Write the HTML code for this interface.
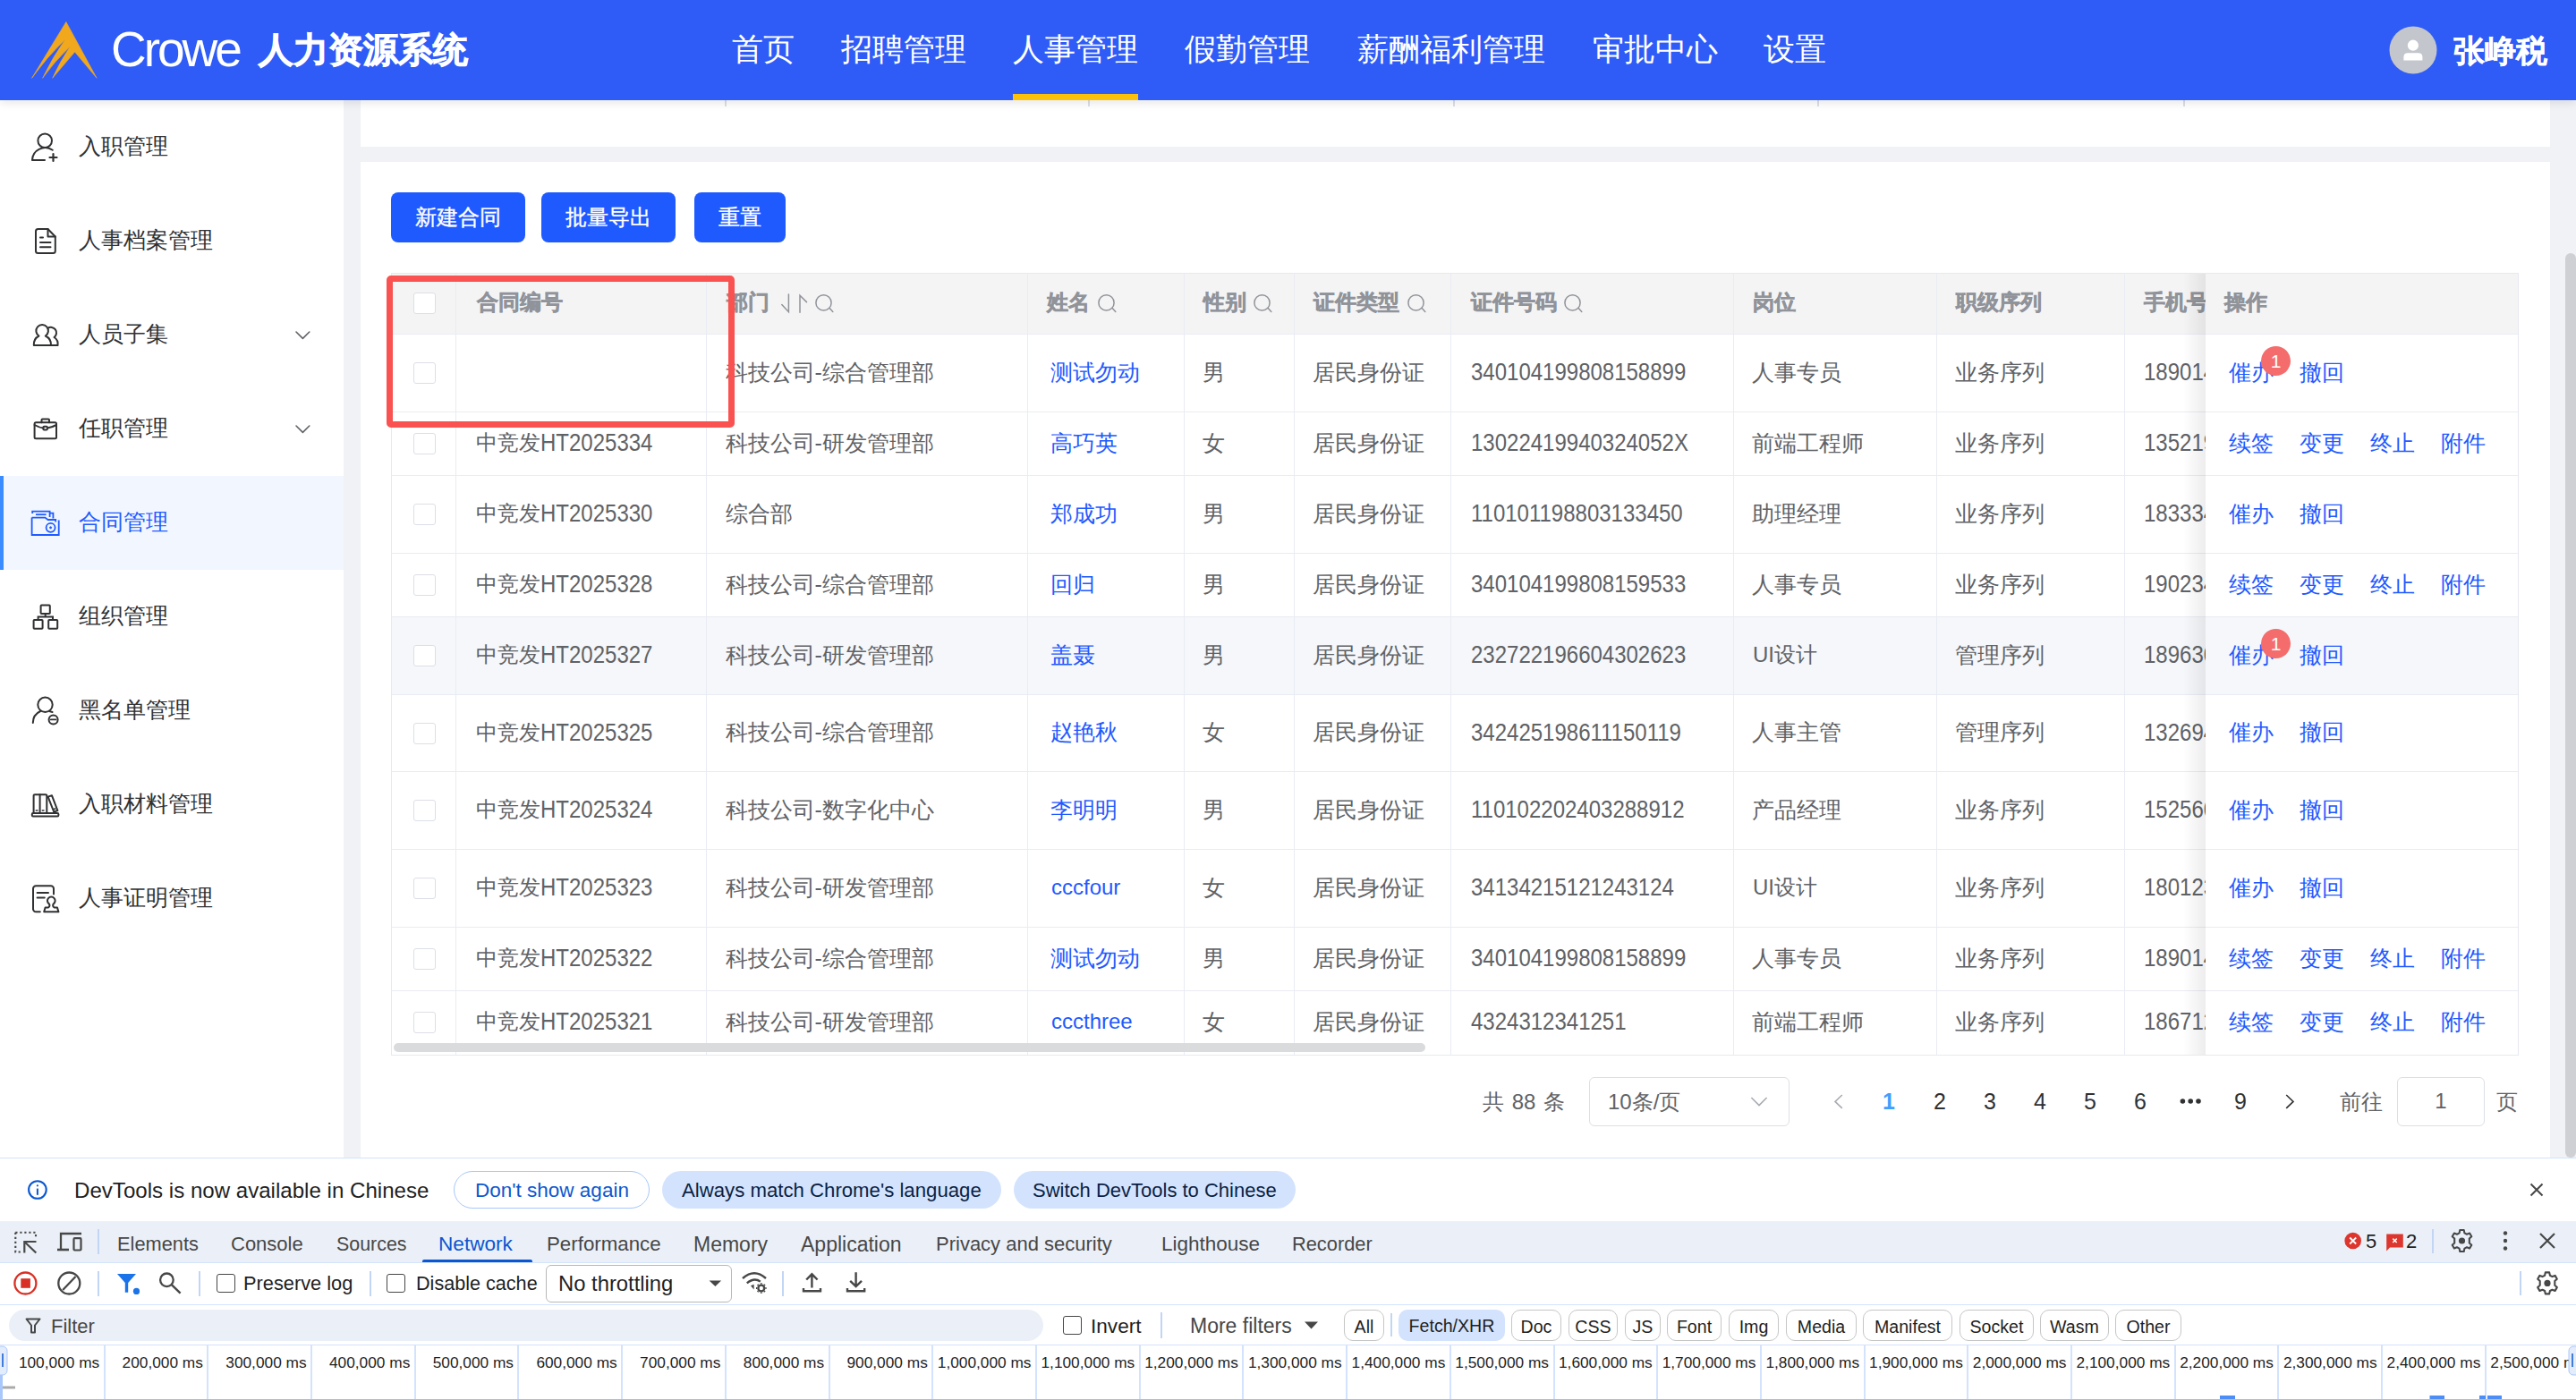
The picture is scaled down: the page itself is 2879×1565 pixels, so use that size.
<!DOCTYPE html>
<html><head><meta charset="utf-8">
<style>
*{box-sizing:border-box;margin:0;padding:0}
html,body{width:2879px;height:1565px;overflow:hidden}
body{position:relative;background:#f0f2f5;font-family:"Liberation Sans",sans-serif;color:#333}
.abs{position:absolute}
/* header */
#hdr{left:0;top:0;width:2879px;height:112px;background:#2f5cf6;box-shadow:0 3px 10px rgba(0,0,0,0.10);z-index:5}
.nav{position:absolute;top:27px;height:56px;line-height:56px;font-size:35.3px;color:#fff;white-space:nowrap}
/* sidebar */
#side{left:0;top:112px;width:384px;height:1182px;background:#fff}
.mi{position:absolute;left:0;width:384px;height:105px}
.mi .t{position:absolute;left:88px;top:-1px;line-height:105px;font-size:24.5px;color:#303133;white-space:nowrap}
.mi svg{position:absolute;left:33px;top:37px;width:34px;height:34px}
.mi .chev{position:absolute;left:329px;top:45px;width:20px;height:14px}
/* panels */
#topp{left:403px;top:112px;width:2447px;height:52px;background:#fff}
#card{left:403px;top:181px;width:2447px;height:1113px;background:#fff}
/* scrollbar */
#vtrack{display:none}
#vthumb{left:2867px;top:283px;width:12px;height:1011px;background:#cfd0d3;border-radius:6px}
/* buttons */
.btn{position:absolute;top:215px;height:56px;background:#1f5aff;border-radius:8px;color:#fff;font-size:24px;line-height:56px;text-align:center;-webkit-text-stroke:0.35px #fff}
/* table */
#tbl{left:437px;top:305px;width:2378px;height:875px;border:1px solid #e6e9f0;background:#fff;overflow:hidden}
.hrow{position:absolute;left:0;top:0;width:100%;height:68px;background:#f4f4f5;border-bottom:1px solid #e6e9f0}
.row{position:absolute;left:0;width:100%;border-bottom:1px solid #e9ecf3}
.vl{position:absolute;top:0;width:1px;height:100%;background:#e9ecf3}
.c{position:absolute;white-space:nowrap;font-size:24px;color:#606266}
.h{position:absolute;white-space:nowrap;font-size:24px;color:#909399;font-weight:bold;-webkit-text-stroke:0.5px #909399}
.lk{color:#1f5aff}
.pg{font-size:24px;white-space:nowrap}
.pn{top:1204px;width:56px;text-align:center;line-height:55px;color:#303133;font-size:25px}
/* devtools */
.dtt{white-space:nowrap}
#dt{left:0;top:1294px;width:2879px;height:271px;background:#fff;border-top:1px solid #d3e3fd;font-family:"Liberation Sans",sans-serif;color:#1f1f1f}
</style></head><body>

<div id="hdr" class="abs">
  <svg class="abs" style="left:0;top:0" width="130" height="112" viewBox="0 0 130 112"><path d="M73.9 24.4 L108.1 87.3 L83.6 58.1 L58.7 87.3 Q67.3 68.3 78.4 52.1 Q61.3 68.3 47.6 87.3 Q58.8 63.8 73 43.9 Q52.3 63.8 35.6 87.3 Z" fill="#f2a81d" stroke="#f2a81d" stroke-width="0.6" stroke-linejoin="round"/></svg>
  <div class="abs" style="left:124px;top:20px;font-size:55px;line-height:70px;color:#fff;letter-spacing:-3px">Crowe</div>
  <div class="abs" style="left:289px;top:28px;font-size:39px;line-height:56px;color:#fff;font-weight:bold;-webkit-text-stroke:0.9px #fff">人力资源系统</div>
  <div class="nav" style="left:818px">首页</div>
  <div class="nav" style="left:940px">招聘管理</div>
  <div class="nav" style="left:1132px">人事管理</div>
  <div class="nav" style="left:1324px">假勤管理</div>
  <div class="nav" style="left:1517px">薪酬福利管理</div>
  <div class="nav" style="left:1780px">审批中心</div>
  <div class="nav" style="left:1971px">设置</div>
  <div class="abs" style="left:1132px;top:105px;width:140px;height:7px;background:#fcc10a"></div>
  <svg class="abs" style="left:2670px;top:29px" width="54" height="54" viewBox="0 0 54 54"><circle cx="27" cy="27" r="26.5" fill="#c3c6cc"/><circle cx="26.9" cy="21.7" r="6.1" fill="#fff"/><path d="M16.4 38.4 V34.5 A4.5 4.5 0 0 1 20.9 30.2 H32.9 A4.5 4.5 0 0 1 37.4 34.5 V38.4 Z" fill="#fff"/></svg>
  <div class="abs" style="left:2742px;top:29px;font-size:35px;line-height:56px;color:#fff;font-weight:bold;-webkit-text-stroke:0.4px #fff">张峥税</div>
</div>

<div id="side" class="abs">
  <div class="mi" style="top:0"><div class="t">入职管理</div></div>
  <div class="mi" style="top:105px"><div class="t">人事档案管理</div></div>
  <div class="mi" style="top:210px"><div class="t">人员子集</div></div>
  <div class="mi" style="top:315px"><div class="t">任职管理</div></div>
  <div class="mi" style="top:420px;background:#f1f6ff"><div style="position:absolute;left:0;top:0;width:4px;height:105px;background:#3b8cff"></div><div class="t" style="color:#1f5bff">合同管理</div></div>
  <div class="mi" style="top:525px"><div class="t">组织管理</div></div>
  <div class="mi" style="top:630px"><div class="t">黑名单管理</div></div>
  <div class="mi" style="top:735px"><div class="t">入职材料管理</div></div>
  <div class="mi" style="top:840px"><div class="t">人事证明管理</div></div>
</div>
<svg class="abs" style="left:0;top:0;z-index:2" width="384" height="1294" viewBox="0 0 384 1294" fill="none" stroke="#303133" stroke-width="2" stroke-linecap="round" stroke-linejoin="round">
  <!-- user add -->
  <circle cx="50.2" cy="157.2" r="7.8"/>
  <path d="M58.8 167.8 A14.5 14.5 0 0 0 36 179 L50 179"/>
  <path d="M55.5 176 H63.5 M59.5 172 V180" stroke-width="2.2"/>
  <!-- doc -->
  <path d="M42.5 256 H53.5 L61.8 264.5 V280.5 A2.5 2.5 0 0 1 59.3 283 H42.5 A2.5 2.5 0 0 1 40 280.5 V258.5 A2.5 2.5 0 0 1 42.5 256 Z"/>
  <path d="M53.5 256 V264.5 H61.8"/>
  <path d="M45 265.5 H48 M45 271 H56.5 M45 276.3 H56.5"/>
  <!-- users -->
  <path d="M43.5 375.5 A6.8 6.8 0 1 1 50.8 375.5 A11 11 0 0 1 57 386 H37.8 A11 11 0 0 1 43.5 375.5 Z"/>
  <path d="M53.3 367 A5.5 5.5 0 0 1 60.5 377 A9 9 0 0 1 64.5 386 H57"/>
  <!-- briefcase -->
  <rect x="38.6" y="472.3" width="24.4" height="18" rx="1.5"/>
  <path d="M46.5 472.3 V469.5 A1 1 0 0 1 47.5 468.5 H54 A1 1 0 0 1 55 469.5 V472.3"/>
  <path d="M38.6 475 Q44 478 48.5 478.5 M53 478.5 Q57.5 478 63 475"/>
  <rect x="48.3" y="476.8" width="4.6" height="3.6" rx="1.2"/>
  <!-- folder (active) -->
  <g stroke="#1f5bff" stroke-linecap="butt" stroke-linejoin="miter" stroke-width="1.8">
    <path d="M36.2 574 V571.6 H55.6 V578"/>
    <path d="M55.6 573.6 H59.4 V579.5"/>
    <path d="M40 575.2 H51.6"/>
    <path d="M35.6 578.6 H50.4 L53.6 581 H62.2 V583.4"/>
    <path d="M35.6 578.6 V598 H65.7 V581.6"/>
    <circle cx="56.6" cy="589.8" r="5"/>
    <circle cx="56.6" cy="589.8" r="1.1" fill="#1f5bff" stroke-width="0.8"/>
  </g>
  <!-- org -->
  <g stroke-linecap="butt" stroke-linejoin="miter">
    <rect x="45.6" y="676.6" width="10.2" height="9.4" rx="0.8"/>
    <path d="M50.7 686 V689.6 M42.6 693 V689.6 H59 V693"/>
    <rect x="37.6" y="693" width="10" height="9.8" rx="0.8"/>
    <rect x="54.2" y="693" width="10" height="9.8" rx="0.8"/>
  </g>
  <!-- user minus -->
  <circle cx="50.5" cy="787.8" r="8.2"/>
  <path d="M45.2 795 A14.5 14.5 0 0 0 36.8 808"/>
  <path d="M55.8 795.3 L58.6 796"/>
  <circle cx="59.6" cy="804.4" r="5"/>
  <path d="M56.8 804.4 H62.4" stroke-width="1.8"/>
  <!-- books -->
  <rect x="35.8" y="909" width="29.6" height="3.4" rx="1.2"/>
  <path d="M37.6 909 V889.5 A1.3 1.3 0 0 1 38.9 888.2 H51 A1.3 1.3 0 0 1 52.3 889.5 V909"/>
  <path d="M44.6 888.2 V909"/>
  <path d="M53.6 890.6 L58 889.3 L64.4 906 L60.2 907.5 Z"/>
  <path d="M40.2 906 H42 M47.2 906 H49 M60 904.5 L61.8 904" stroke-width="1.4"/>
  <!-- certificate -->
  <path d="M44.8 1019.3 H40.2 A3.2 3.2 0 0 1 37 1016 V993.5 A3.2 3.2 0 0 1 40.2 990.3 H56.8 A3.2 3.2 0 0 1 60 993.5 V999.5"/>
  <path d="M41.6 997.9 H54 M41.6 1003.6 H49.8"/>
  <path d="M55 1010.5 A4.3 4.3 0 1 1 59.6 1010.5 Q58.4 1013.2 60.6 1014.5 H64 L65.4 1019.3 H49.2 L50.6 1014.5 H54 Q56.2 1013.2 55 1010.5 Z"/>
  <!-- chevrons -->
  <path d="M331 371 L338.4 378.4 L345.8 371" stroke="#606266" stroke-width="1.6"/>
  <path d="M331 476 L338.4 483.4 L345.8 476" stroke="#606266" stroke-width="1.6"/>
</svg>
<div id="topp" class="abs"></div>
<div class="abs" style="left:810px;top:112px;width:1.5px;height:7px;background:#dcdfe6"></div><div class="abs" style="left:1216px;top:112px;width:1.5px;height:7px;background:#dcdfe6"></div><div class="abs" style="left:1624px;top:112px;width:1.5px;height:7px;background:#dcdfe6"></div><div class="abs" style="left:2031px;top:112px;width:1.5px;height:7px;background:#dcdfe6"></div><div class="abs" style="left:2440px;top:112px;width:1.5px;height:7px;background:#dcdfe6"></div>
<div id="card" class="abs"></div>
<!--CARD-->
<div class="btn" style="left:437px;width:150px">新建合同</div>
<div class="btn" style="left:605px;width:150px">批量导出</div>
<div class="btn" style="left:776px;width:102px">重置</div>
<div id="tbl" class="abs">
<div class="hrow"></div>
<div class="abs" style="left:0;top:384px;width:2378px;height:86px;background:#f5f7fa"></div>
<div class="abs" style="left:0;top:67px;width:2378px;height:1px;background:#e9ecf3"></div>
<div class="abs" style="left:0;top:154px;width:2378px;height:1px;background:#e9ecf3"></div>
<div class="abs" style="left:0;top:225px;width:2378px;height:1px;background:#e9ecf3"></div>
<div class="abs" style="left:0;top:312px;width:2378px;height:1px;background:#e9ecf3"></div>
<div class="abs" style="left:0;top:383px;width:2378px;height:1px;background:#e9ecf3"></div>
<div class="abs" style="left:0;top:470px;width:2378px;height:1px;background:#e9ecf3"></div>
<div class="abs" style="left:0;top:556px;width:2378px;height:1px;background:#e9ecf3"></div>
<div class="abs" style="left:0;top:643px;width:2378px;height:1px;background:#e9ecf3"></div>
<div class="abs" style="left:0;top:730px;width:2378px;height:1px;background:#e9ecf3"></div>
<div class="abs" style="left:0;top:801px;width:2378px;height:1px;background:#e9ecf3"></div>
<div class="abs" style="left:71px;top:0;width:1px;height:875px;background:#e9ecf3"></div>
<div class="abs" style="left:351px;top:0;width:1px;height:875px;background:#e9ecf3"></div>
<div class="abs" style="left:710px;top:0;width:1px;height:875px;background:#e9ecf3"></div>
<div class="abs" style="left:885px;top:0;width:1px;height:875px;background:#e9ecf3"></div>
<div class="abs" style="left:1008px;top:0;width:1px;height:875px;background:#e9ecf3"></div>
<div class="abs" style="left:1183px;top:0;width:1px;height:875px;background:#e9ecf3"></div>
<div class="abs" style="left:1499px;top:0;width:1px;height:875px;background:#e9ecf3"></div>
<div class="abs" style="left:1726px;top:0;width:1px;height:875px;background:#e9ecf3"></div>
<div class="abs" style="left:1936px;top:0;width:1px;height:875px;background:#e9ecf3"></div>
<div class="h" style="left:95px;top:-2px;line-height:68px">合同编号</div>
<div class="h" style="left:374px;top:-2px;line-height:68px">部门</div>
<div class="h" style="left:732px;top:-2px;line-height:68px">姓名</div>
<div class="h" style="left:907px;top:-2px;line-height:68px">性别</div>
<div class="h" style="left:1030px;top:-2px;line-height:68px">证件类型</div>
<div class="h" style="left:1206px;top:-2px;line-height:68px">证件号码</div>
<div class="h" style="left:1521px;top:-2px;line-height:68px">岗位</div>
<div class="h" style="left:1748px;top:-2px;line-height:68px">职级序列</div>
<div class="h" style="left:1958px;top:-2px;line-height:68px">手机号</div>
<svg class="abs" style="left:473px;top:23px" width="22" height="22" viewBox="0 0 22 22" fill="none" stroke="#909399" stroke-width="1.5"><circle cx="9.5" cy="9.4" r="8.6"/><path d="M16.2 15.6 L19.8 19.4" stroke-linecap="round"/></svg>
<svg class="abs" style="left:789px;top:23px" width="22" height="22" viewBox="0 0 22 22" fill="none" stroke="#909399" stroke-width="1.5"><circle cx="9.5" cy="9.4" r="8.6"/><path d="M16.2 15.6 L19.8 19.4" stroke-linecap="round"/></svg>
<svg class="abs" style="left:963px;top:23px" width="22" height="22" viewBox="0 0 22 22" fill="none" stroke="#909399" stroke-width="1.5"><circle cx="9.5" cy="9.4" r="8.6"/><path d="M16.2 15.6 L19.8 19.4" stroke-linecap="round"/></svg>
<svg class="abs" style="left:1135px;top:23px" width="22" height="22" viewBox="0 0 22 22" fill="none" stroke="#909399" stroke-width="1.5"><circle cx="9.5" cy="9.4" r="8.6"/><path d="M16.2 15.6 L19.8 19.4" stroke-linecap="round"/></svg>
<svg class="abs" style="left:1310px;top:23px" width="22" height="22" viewBox="0 0 22 22" fill="none" stroke="#909399" stroke-width="1.5"><circle cx="9.5" cy="9.4" r="8.6"/><path d="M16.2 15.6 L19.8 19.4" stroke-linecap="round"/></svg>
<svg class="abs" style="left:434px;top:21px" width="32" height="24" viewBox="0 0 32 24" fill="none" stroke="#909399" stroke-width="1.5" stroke-linecap="round"><path d="M9.4 2 V21.7 L1.8 13.5"/><path d="M22 22.2 V3.2 L29.5 10.6"/></svg>
<div class="abs" style="left:24px;top:20.5px;width:25px;height:24px;border:1.5px solid #dcdfe6;border-radius:3px;background:#fff"></div>
<div class="abs" style="left:24px;top:99.0px;width:25px;height:24px;border:1.5px solid #dcdfe6;border-radius:3px;background:#fff"></div>
<div class="c" style="left:94px;top:67px;line-height:86px"></div>
<div class="c" style="left:372.5px;top:67px;line-height:86px;font-size:25px">科技公司-综合管理部</div>
<div class="c lk" style="left:735.5px;top:67px;line-height:86px;font-size:25px">测试勿动</div>
<div class="c" style="left:905.5px;top:67px;line-height:86px;font-size:25px">男</div>
<div class="c" style="left:1028.5px;top:67px;line-height:86px;font-size:25px">居民身份证</div>
<div class="c" style="left:1206px;top:67px;line-height:86px"><span style="display:inline-block;transform:scaleY(1.16);transform-origin:50% 55%">340104199808158899</span></div>
<div class="c" style="left:1519.5px;top:67px;line-height:86px;font-size:25px">人事专员</div>
<div class="c" style="left:1746.5px;top:67px;line-height:86px;font-size:25px">业务序列</div>
<div class="c" style="left:1958px;top:67px;line-height:86px"><span style="display:inline-block;transform:scaleY(1.16);transform-origin:50% 55%">18901456789</span></div>
<div class="abs" style="left:24px;top:178.0px;width:25px;height:24px;border:1.5px solid #dcdfe6;border-radius:3px;background:#fff"></div>
<div class="c" style="left:94px;top:154px;line-height:70px">中竞发<span style="display:inline-block;transform:scaleY(1.14);transform-origin:50% 55%">HT2025334</span></div>
<div class="c" style="left:372.5px;top:154px;line-height:70px;font-size:25px">科技公司-研发管理部</div>
<div class="c lk" style="left:735.5px;top:154px;line-height:70px;font-size:25px">高巧英</div>
<div class="c" style="left:905.5px;top:154px;line-height:70px;font-size:25px">女</div>
<div class="c" style="left:1028.5px;top:154px;line-height:70px;font-size:25px">居民身份证</div>
<div class="c" style="left:1206px;top:154px;line-height:70px"><span style="display:inline-block;transform:scaleY(1.16);transform-origin:50% 55%">13022419940324052X</span></div>
<div class="c" style="left:1519.5px;top:154px;line-height:70px;font-size:25px">前端工程师</div>
<div class="c" style="left:1746.5px;top:154px;line-height:70px;font-size:25px">业务序列</div>
<div class="c" style="left:1958px;top:154px;line-height:70px"><span style="display:inline-block;transform:scaleY(1.16);transform-origin:50% 55%">13521987654</span></div>
<div class="abs" style="left:24px;top:257.0px;width:25px;height:24px;border:1.5px solid #dcdfe6;border-radius:3px;background:#fff"></div>
<div class="c" style="left:94px;top:225px;line-height:86px">中竞发<span style="display:inline-block;transform:scaleY(1.14);transform-origin:50% 55%">HT2025330</span></div>
<div class="c" style="left:372.5px;top:225px;line-height:86px;font-size:25px">综合部</div>
<div class="c lk" style="left:735.5px;top:225px;line-height:86px;font-size:25px">郑成功</div>
<div class="c" style="left:905.5px;top:225px;line-height:86px;font-size:25px">男</div>
<div class="c" style="left:1028.5px;top:225px;line-height:86px;font-size:25px">居民身份证</div>
<div class="c" style="left:1206px;top:225px;line-height:86px"><span style="display:inline-block;transform:scaleY(1.16);transform-origin:50% 55%">110101198803133450</span></div>
<div class="c" style="left:1519.5px;top:225px;line-height:86px;font-size:25px">助理经理</div>
<div class="c" style="left:1746.5px;top:225px;line-height:86px;font-size:25px">业务序列</div>
<div class="c" style="left:1958px;top:225px;line-height:86px"><span style="display:inline-block;transform:scaleY(1.16);transform-origin:50% 55%">18333456789</span></div>
<div class="abs" style="left:24px;top:336.0px;width:25px;height:24px;border:1.5px solid #dcdfe6;border-radius:3px;background:#fff"></div>
<div class="c" style="left:94px;top:312px;line-height:70px">中竞发<span style="display:inline-block;transform:scaleY(1.14);transform-origin:50% 55%">HT2025328</span></div>
<div class="c" style="left:372.5px;top:312px;line-height:70px;font-size:25px">科技公司-综合管理部</div>
<div class="c lk" style="left:735.5px;top:312px;line-height:70px;font-size:25px">回归</div>
<div class="c" style="left:905.5px;top:312px;line-height:70px;font-size:25px">男</div>
<div class="c" style="left:1028.5px;top:312px;line-height:70px;font-size:25px">居民身份证</div>
<div class="c" style="left:1206px;top:312px;line-height:70px"><span style="display:inline-block;transform:scaleY(1.16);transform-origin:50% 55%">340104199808159533</span></div>
<div class="c" style="left:1519.5px;top:312px;line-height:70px;font-size:25px">人事专员</div>
<div class="c" style="left:1746.5px;top:312px;line-height:70px;font-size:25px">业务序列</div>
<div class="c" style="left:1958px;top:312px;line-height:70px"><span style="display:inline-block;transform:scaleY(1.16);transform-origin:50% 55%">19023456789</span></div>
<div class="abs" style="left:24px;top:415.0px;width:25px;height:24px;border:1.5px solid #dcdfe6;border-radius:3px;background:#fff"></div>
<div class="c" style="left:94px;top:383px;line-height:86px">中竞发<span style="display:inline-block;transform:scaleY(1.14);transform-origin:50% 55%">HT2025327</span></div>
<div class="c" style="left:372.5px;top:383px;line-height:86px;font-size:25px">科技公司-研发管理部</div>
<div class="c lk" style="left:735.5px;top:383px;line-height:86px;font-size:25px">盖聂</div>
<div class="c" style="left:905.5px;top:383px;line-height:86px;font-size:25px">男</div>
<div class="c" style="left:1028.5px;top:383px;line-height:86px;font-size:25px">居民身份证</div>
<div class="c" style="left:1206px;top:383px;line-height:86px"><span style="display:inline-block;transform:scaleY(1.16);transform-origin:50% 55%">232722196604302623</span></div>
<div class="c" style="left:1521px;top:383px;line-height:86px">UI设计</div>
<div class="c" style="left:1746.5px;top:383px;line-height:86px;font-size:25px">管理序列</div>
<div class="c" style="left:1958px;top:383px;line-height:86px"><span style="display:inline-block;transform:scaleY(1.16);transform-origin:50% 55%">18963056789</span></div>
<div class="abs" style="left:24px;top:501.5px;width:25px;height:24px;border:1.5px solid #dcdfe6;border-radius:3px;background:#fff"></div>
<div class="c" style="left:94px;top:470px;line-height:85px">中竞发<span style="display:inline-block;transform:scaleY(1.14);transform-origin:50% 55%">HT2025325</span></div>
<div class="c" style="left:372.5px;top:470px;line-height:85px;font-size:25px">科技公司-综合管理部</div>
<div class="c lk" style="left:735.5px;top:470px;line-height:85px;font-size:25px">赵艳秋</div>
<div class="c" style="left:905.5px;top:470px;line-height:85px;font-size:25px">女</div>
<div class="c" style="left:1028.5px;top:470px;line-height:85px;font-size:25px">居民身份证</div>
<div class="c" style="left:1206px;top:470px;line-height:85px"><span style="display:inline-block;transform:scaleY(1.16);transform-origin:50% 55%">342425198611150119</span></div>
<div class="c" style="left:1519.5px;top:470px;line-height:85px;font-size:25px">人事主管</div>
<div class="c" style="left:1746.5px;top:470px;line-height:85px;font-size:25px">管理序列</div>
<div class="c" style="left:1958px;top:470px;line-height:85px"><span style="display:inline-block;transform:scaleY(1.16);transform-origin:50% 55%">13269456789</span></div>
<div class="abs" style="left:24px;top:588.0px;width:25px;height:24px;border:1.5px solid #dcdfe6;border-radius:3px;background:#fff"></div>
<div class="c" style="left:94px;top:556px;line-height:86px">中竞发<span style="display:inline-block;transform:scaleY(1.14);transform-origin:50% 55%">HT2025324</span></div>
<div class="c" style="left:372.5px;top:556px;line-height:86px;font-size:25px">科技公司-数字化中心</div>
<div class="c lk" style="left:735.5px;top:556px;line-height:86px;font-size:25px">李明明</div>
<div class="c" style="left:905.5px;top:556px;line-height:86px;font-size:25px">男</div>
<div class="c" style="left:1028.5px;top:556px;line-height:86px;font-size:25px">居民身份证</div>
<div class="c" style="left:1206px;top:556px;line-height:86px"><span style="display:inline-block;transform:scaleY(1.16);transform-origin:50% 55%">110102202403288912</span></div>
<div class="c" style="left:1519.5px;top:556px;line-height:86px;font-size:25px">产品经理</div>
<div class="c" style="left:1746.5px;top:556px;line-height:86px;font-size:25px">业务序列</div>
<div class="c" style="left:1958px;top:556px;line-height:86px"><span style="display:inline-block;transform:scaleY(1.16);transform-origin:50% 55%">15256056789</span></div>
<div class="abs" style="left:24px;top:675.0px;width:25px;height:24px;border:1.5px solid #dcdfe6;border-radius:3px;background:#fff"></div>
<div class="c" style="left:94px;top:643px;line-height:86px">中竞发<span style="display:inline-block;transform:scaleY(1.14);transform-origin:50% 55%">HT2025323</span></div>
<div class="c" style="left:372.5px;top:643px;line-height:86px;font-size:25px">科技公司-研发管理部</div>
<div class="c lk" style="left:737px;top:643px;line-height:86px">cccfour</div>
<div class="c" style="left:905.5px;top:643px;line-height:86px;font-size:25px">女</div>
<div class="c" style="left:1028.5px;top:643px;line-height:86px;font-size:25px">居民身份证</div>
<div class="c" style="left:1206px;top:643px;line-height:86px"><span style="display:inline-block;transform:scaleY(1.16);transform-origin:50% 55%">34134215121243124</span></div>
<div class="c" style="left:1521px;top:643px;line-height:86px">UI设计</div>
<div class="c" style="left:1746.5px;top:643px;line-height:86px;font-size:25px">业务序列</div>
<div class="c" style="left:1958px;top:643px;line-height:86px"><span style="display:inline-block;transform:scaleY(1.16);transform-origin:50% 55%">18012356789</span></div>
<div class="abs" style="left:24px;top:754.0px;width:25px;height:24px;border:1.5px solid #dcdfe6;border-radius:3px;background:#fff"></div>
<div class="c" style="left:94px;top:730px;line-height:70px">中竞发<span style="display:inline-block;transform:scaleY(1.14);transform-origin:50% 55%">HT2025322</span></div>
<div class="c" style="left:372.5px;top:730px;line-height:70px;font-size:25px">科技公司-综合管理部</div>
<div class="c lk" style="left:735.5px;top:730px;line-height:70px;font-size:25px">测试勿动</div>
<div class="c" style="left:905.5px;top:730px;line-height:70px;font-size:25px">男</div>
<div class="c" style="left:1028.5px;top:730px;line-height:70px;font-size:25px">居民身份证</div>
<div class="c" style="left:1206px;top:730px;line-height:70px"><span style="display:inline-block;transform:scaleY(1.16);transform-origin:50% 55%">340104199808158899</span></div>
<div class="c" style="left:1519.5px;top:730px;line-height:70px;font-size:25px">人事专员</div>
<div class="c" style="left:1746.5px;top:730px;line-height:70px;font-size:25px">业务序列</div>
<div class="c" style="left:1958px;top:730px;line-height:70px"><span style="display:inline-block;transform:scaleY(1.16);transform-origin:50% 55%">18901456789</span></div>
<div class="abs" style="left:24px;top:825.0px;width:25px;height:24px;border:1.5px solid #dcdfe6;border-radius:3px;background:#fff"></div>
<div class="c" style="left:94px;top:801px;line-height:70px">中竞发<span style="display:inline-block;transform:scaleY(1.14);transform-origin:50% 55%">HT2025321</span></div>
<div class="c" style="left:372.5px;top:801px;line-height:70px;font-size:25px">科技公司-研发管理部</div>
<div class="c lk" style="left:737px;top:801px;line-height:70px">cccthree</div>
<div class="c" style="left:905.5px;top:801px;line-height:70px;font-size:25px">女</div>
<div class="c" style="left:1028.5px;top:801px;line-height:70px;font-size:25px">居民身份证</div>
<div class="c" style="left:1206px;top:801px;line-height:70px"><span style="display:inline-block;transform:scaleY(1.16);transform-origin:50% 55%">4324312341251</span></div>
<div class="c" style="left:1519.5px;top:801px;line-height:70px;font-size:25px">前端工程师</div>
<div class="c" style="left:1746.5px;top:801px;line-height:70px;font-size:25px">业务序列</div>
<div class="c" style="left:1958px;top:801px;line-height:70px"><span style="display:inline-block;transform:scaleY(1.16);transform-origin:50% 55%">18671256789</span></div>
</div>
<div class="abs" style="left:2440px;top:306px;width:25px;height:873px;background:linear-gradient(to right,rgba(0,0,0,0),rgba(0,0,0,0.07))"></div>
<div id="fix" class="abs" style="left:2465px;top:306px;width:349px;height:873px;background:#fff;overflow:hidden">
<div class="abs" style="left:0;top:0;width:349px;height:67px;background:#f4f4f5"></div>
<div class="abs" style="left:0;top:384px;width:349px;height:86px;background:#f5f7fa"></div>
<div class="abs" style="left:0;top:67px;width:349px;height:1px;background:#e9ecf3"></div>
<div class="abs" style="left:0;top:154px;width:349px;height:1px;background:#e9ecf3"></div>
<div class="abs" style="left:0;top:225px;width:349px;height:1px;background:#e9ecf3"></div>
<div class="abs" style="left:0;top:312px;width:349px;height:1px;background:#e9ecf3"></div>
<div class="abs" style="left:0;top:383px;width:349px;height:1px;background:#e9ecf3"></div>
<div class="abs" style="left:0;top:470px;width:349px;height:1px;background:#e9ecf3"></div>
<div class="abs" style="left:0;top:556px;width:349px;height:1px;background:#e9ecf3"></div>
<div class="abs" style="left:0;top:643px;width:349px;height:1px;background:#e9ecf3"></div>
<div class="abs" style="left:0;top:730px;width:349px;height:1px;background:#e9ecf3"></div>
<div class="abs" style="left:0;top:801px;width:349px;height:1px;background:#e9ecf3"></div>
<div class="h" style="left:21px;top:-2px;line-height:68px">操作</div>
<div class="c lk" style="left:26px;top:67px;line-height:86px;font-size:25px">催办</div>
<div class="c lk" style="left:105px;top:67px;line-height:86px;font-size:25px">撤回</div>
<div class="abs" style="left:62px;top:80.5px;width:33px;height:33px;border-radius:50%;background:#f56c6c;color:#fff;font-size:21px;line-height:33px;text-align:center">1</div>
<div class="c lk" style="left:26px;top:154px;line-height:70px;font-size:25px">续签</div>
<div class="c lk" style="left:105px;top:154px;line-height:70px;font-size:25px">变更</div>
<div class="c lk" style="left:184px;top:154px;line-height:70px;font-size:25px">终止</div>
<div class="c lk" style="left:263px;top:154px;line-height:70px;font-size:25px">附件</div>
<div class="c lk" style="left:26px;top:225px;line-height:86px;font-size:25px">催办</div>
<div class="c lk" style="left:105px;top:225px;line-height:86px;font-size:25px">撤回</div>
<div class="c lk" style="left:26px;top:312px;line-height:70px;font-size:25px">续签</div>
<div class="c lk" style="left:105px;top:312px;line-height:70px;font-size:25px">变更</div>
<div class="c lk" style="left:184px;top:312px;line-height:70px;font-size:25px">终止</div>
<div class="c lk" style="left:263px;top:312px;line-height:70px;font-size:25px">附件</div>
<div class="c lk" style="left:26px;top:383px;line-height:86px;font-size:25px">催办</div>
<div class="c lk" style="left:105px;top:383px;line-height:86px;font-size:25px">撤回</div>
<div class="abs" style="left:62px;top:396.5px;width:33px;height:33px;border-radius:50%;background:#f56c6c;color:#fff;font-size:21px;line-height:33px;text-align:center">1</div>
<div class="c lk" style="left:26px;top:470px;line-height:85px;font-size:25px">催办</div>
<div class="c lk" style="left:105px;top:470px;line-height:85px;font-size:25px">撤回</div>
<div class="c lk" style="left:26px;top:556px;line-height:86px;font-size:25px">催办</div>
<div class="c lk" style="left:105px;top:556px;line-height:86px;font-size:25px">撤回</div>
<div class="c lk" style="left:26px;top:643px;line-height:86px;font-size:25px">催办</div>
<div class="c lk" style="left:105px;top:643px;line-height:86px;font-size:25px">撤回</div>
<div class="c lk" style="left:26px;top:730px;line-height:70px;font-size:25px">续签</div>
<div class="c lk" style="left:105px;top:730px;line-height:70px;font-size:25px">变更</div>
<div class="c lk" style="left:184px;top:730px;line-height:70px;font-size:25px">终止</div>
<div class="c lk" style="left:263px;top:730px;line-height:70px;font-size:25px">附件</div>
<div class="c lk" style="left:26px;top:801px;line-height:70px;font-size:25px">续签</div>
<div class="c lk" style="left:105px;top:801px;line-height:70px;font-size:25px">变更</div>
<div class="c lk" style="left:184px;top:801px;line-height:70px;font-size:25px">终止</div>
<div class="c lk" style="left:263px;top:801px;line-height:70px;font-size:25px">附件</div>
</div>
<div class="abs" style="left:440px;top:1166px;width:1153px;height:10px;border-radius:5px;background:#dadbdd"></div>
<div class="abs" style="left:432px;top:308px;width:389px;height:170px;border:7px solid #fa5151;border-radius:5px;z-index:3"></div>
<div id="pag">
<div class="abs pg" style="left:1657px;top:1204px;line-height:55px;color:#606266;word-spacing:2px">共 88 条</div>
<div class="abs" style="left:1776px;top:1204px;width:224px;height:55px;border:1.5px solid #dcdfe6;border-radius:6px"></div>
<div class="abs pg" style="left:1797px;top:1204px;line-height:55px;color:#606266">10条/页</div>
<svg class="abs" style="left:1955px;top:1224px" width="22" height="14" viewBox="0 0 22 14" fill="none" stroke="#a8abb2" stroke-width="1.6"><path d="M2.4 3 L11 11.6 L19.6 3"/></svg>
<svg class="abs" style="left:2048px;top:1222px" width="14" height="20" viewBox="0 0 14 20" fill="none" stroke="#a8abb2" stroke-width="1.6"><path d="M10.8 2 L3 9.4 L10.8 16.8"/></svg>
<div class="abs pg pn" style="left:2083px;color:#409eff;font-weight:bold">1</div>
<div class="abs pg pn" style="left:2140px">2</div>
<div class="abs pg pn" style="left:2196px">3</div>
<div class="abs pg pn" style="left:2252px">4</div>
<div class="abs pg pn" style="left:2308px">5</div>
<div class="abs pg pn" style="left:2364px">6</div>
<svg class="abs" style="left:2436px;top:1226px" width="26" height="10" viewBox="0 0 26 10"><circle cx="3.4" cy="5" r="2.8" fill="#303133"/><circle cx="12.2" cy="5" r="2.8" fill="#303133"/><circle cx="21" cy="5" r="2.8" fill="#303133"/></svg>
<div class="abs pg pn" style="left:2476px">9</div>
<svg class="abs" style="left:2552px;top:1222px" width="14" height="20" viewBox="0 0 14 20" fill="none" stroke="#303133" stroke-width="1.6"><path d="M3.2 2 L11 9.4 L3.2 16.8"/></svg>
<div class="abs pg" style="left:2615px;top:1204px;line-height:55px;color:#606266">前往</div>
<div class="abs" style="left:2679px;top:1204px;width:98px;height:55px;border:1.5px solid #dcdfe6;border-radius:6px;text-align:center;line-height:52px;font-size:24px;color:#606266">1</div>
<div class="abs pg" style="left:2790px;top:1204px;line-height:55px;color:#606266">页</div>
</div>
<!--/CARD-->
<div id="vtrack" class="abs"></div>
<div id="vthumb" class="abs"></div>

<!--DT-->
<div id="dt" class="abs">
<div class="abs" style="left:0;top:70px;width:2879px;height:47px;background:#ebf0f8;border-bottom:1px solid #d3e3fd"></div>
<div class="abs" style="left:0;top:163px;width:2879px;height:1px;background:#d3e3fd"></div>
<div class="abs" style="left:0;top:208px;width:2879px;height:1px;background:#d3e3fd"></div>
<div class="abs" style="left:10px;top:169px;width:1156px;height:35px;border-radius:18px;background:#ebf0f8"></div>
<div class="abs" style="left:116px;top:209px;width:1.5px;height:62px;background:#d3e3fd"></div>
<div class="abs" style="left:231px;top:209px;width:1.5px;height:62px;background:#d3e3fd"></div>
<div class="abs" style="left:347px;top:209px;width:1.5px;height:62px;background:#d3e3fd"></div>
<div class="abs" style="left:463px;top:209px;width:1.5px;height:62px;background:#d3e3fd"></div>
<div class="abs" style="left:578px;top:209px;width:1.5px;height:62px;background:#d3e3fd"></div>
<div class="abs" style="left:694px;top:209px;width:1.5px;height:62px;background:#d3e3fd"></div>
<div class="abs" style="left:810px;top:209px;width:1.5px;height:62px;background:#d3e3fd"></div>
<div class="abs" style="left:926px;top:209px;width:1.5px;height:62px;background:#d3e3fd"></div>
<div class="abs" style="left:1041px;top:209px;width:1.5px;height:62px;background:#d3e3fd"></div>
<div class="abs" style="left:1157px;top:209px;width:1.5px;height:62px;background:#d3e3fd"></div>
<div class="abs" style="left:1273px;top:209px;width:1.5px;height:62px;background:#d3e3fd"></div>
<div class="abs" style="left:1388px;top:209px;width:1.5px;height:62px;background:#d3e3fd"></div>
<div class="abs" style="left:1504px;top:209px;width:1.5px;height:62px;background:#d3e3fd"></div>
<div class="abs" style="left:1620px;top:209px;width:1.5px;height:62px;background:#d3e3fd"></div>
<div class="abs" style="left:1736px;top:209px;width:1.5px;height:62px;background:#d3e3fd"></div>
<div class="abs" style="left:1851px;top:209px;width:1.5px;height:62px;background:#d3e3fd"></div>
<div class="abs" style="left:1967px;top:209px;width:1.5px;height:62px;background:#d3e3fd"></div>
<div class="abs" style="left:2083px;top:209px;width:1.5px;height:62px;background:#d3e3fd"></div>
<div class="abs" style="left:2198px;top:209px;width:1.5px;height:62px;background:#d3e3fd"></div>
<div class="abs" style="left:2314px;top:209px;width:1.5px;height:62px;background:#d3e3fd"></div>
<div class="abs" style="left:2430px;top:209px;width:1.5px;height:62px;background:#d3e3fd"></div>
<div class="abs" style="left:2545px;top:209px;width:1.5px;height:62px;background:#d3e3fd"></div>
<div class="abs" style="left:2661px;top:209px;width:1.5px;height:62px;background:#d3e3fd"></div>
<div class="abs" style="left:2777px;top:209px;width:1.5px;height:62px;background:#d3e3fd"></div>
</div>
<div class="abs" style="left:0;top:0;z-index:2"><div class="abs dtt" style="left:83px;top:1313px;height:36px;line-height:36px;font-size:24.1px;color:#1f1f1f;">DevTools is now available in Chinese</div>
<div class="abs" style="left:507px;top:1309px;width:219px;height:42px;border:1px solid #a8c7fa;border-radius:21px"></div>
<div class="abs dtt" style="left:531px;top:1313px;height:36px;line-height:36px;font-size:22.5px;color:#0b57d0;">Don't show again</div>
<div class="abs" style="left:740px;top:1309px;width:379px;height:42px;background:#d3e3fd;border-radius:21px"></div>
<div class="abs dtt" style="left:762px;top:1313px;height:36px;line-height:36px;font-size:22.2px;color:#0a1f44;">Always match Chrome's language</div>
<div class="abs" style="left:1133px;top:1309px;width:315px;height:42px;background:#d3e3fd;border-radius:21px"></div>
<div class="abs dtt" style="left:1154px;top:1313px;height:36px;line-height:36px;font-size:22.0px;color:#0a1f44;">Switch DevTools to Chinese</div>
<div class="abs dtt" style="left:131px;top:1372px;height:38px;line-height:38px;font-size:21.8px;color:#474747;">Elements</div>
<div class="abs dtt" style="left:258px;top:1372px;height:38px;line-height:38px;font-size:22px;color:#474747;">Console</div>
<div class="abs dtt" style="left:376px;top:1372px;height:38px;line-height:38px;font-size:21.4px;color:#474747;">Sources</div>
<div class="abs dtt" style="left:490px;top:1372px;height:38px;line-height:38px;font-size:22.6px;color:#0b57d0;">Network</div>
<div class="abs dtt" style="left:611px;top:1372px;height:38px;line-height:38px;font-size:22.3px;color:#474747;">Performance</div>
<div class="abs dtt" style="left:775px;top:1372px;height:38px;line-height:38px;font-size:23px;color:#474747;">Memory</div>
<div class="abs dtt" style="left:895px;top:1372px;height:38px;line-height:38px;font-size:23px;color:#474747;">Application</div>
<div class="abs dtt" style="left:1046px;top:1372px;height:38px;line-height:38px;font-size:22px;color:#474747;">Privacy and security</div>
<div class="abs dtt" style="left:1298px;top:1372px;height:38px;line-height:38px;font-size:22.5px;color:#474747;">Lighthouse</div>
<div class="abs dtt" style="left:1444px;top:1372px;height:38px;line-height:38px;font-size:21.8px;color:#474747;">Recorder</div>
<div class="abs" style="left:472px;top:1408px;width:123px;height:3px;background:#0b57d0;border-radius:2px 2px 0 0"></div>
<div class="abs dtt" style="left:272px;top:1416px;height:38px;line-height:38px;font-size:21.8px;color:#1f1f1f;">Preserve log</div>
<div class="abs dtt" style="left:465px;top:1416px;height:38px;line-height:38px;font-size:21.6px;color:#1f1f1f;">Disable cache</div>
<div class="abs" style="left:242px;top:1424px;width:21px;height:21px;border:1.6px solid #474747;border-radius:3px"></div>
<div class="abs" style="left:432px;top:1424px;width:21px;height:21px;border:1.6px solid #474747;border-radius:3px"></div>
<div class="abs" style="left:610px;top:1414px;width:208px;height:42px;border:1.3px solid #b8b8b8;border-radius:6px"></div>
<div class="abs dtt" style="left:624px;top:1416px;height:38px;line-height:38px;font-size:23.8px;color:#1f1f1f;">No throttling</div>
<div class="abs dtt" style="left:57px;top:1464px;height:38px;line-height:38px;font-size:22px;color:#474747;">Filter</div>
<div class="abs dtt" style="left:1219px;top:1464px;height:38px;line-height:38px;font-size:22.6px;color:#1f1f1f;">Invert</div>
<div class="abs" style="left:1188px;top:1471px;width:21px;height:21px;border:1.6px solid #474747;border-radius:3px"></div>
<div class="abs dtt" style="left:1330px;top:1463px;height:38px;line-height:38px;font-size:23px;color:#474747;">More filters</div>
<div class="abs" style="left:109px;top:1374px;width:1.5px;height:28px;background:#c2d5f5"></div>
<div class="abs" style="left:109px;top:1421px;width:1.5px;height:28px;background:#c2d5f5"></div>
<div class="abs" style="left:222px;top:1421px;width:1.5px;height:28px;background:#c2d5f5"></div>
<div class="abs" style="left:413px;top:1421px;width:1.5px;height:28px;background:#c2d5f5"></div>
<div class="abs" style="left:874px;top:1421px;width:1.5px;height:28px;background:#c2d5f5"></div>
<div class="abs" style="left:1297px;top:1467px;width:1.5px;height:29px;background:#c2d5f5"></div>
<div class="abs" style="left:1554px;top:1468px;width:1.5px;height:26px;background:#c2d5f5"></div>
<div class="abs" style="left:2718px;top:1374px;width:1.5px;height:27px;background:#c2d5f5"></div>
<div class="abs" style="left:2816px;top:1421px;width:1.5px;height:27px;background:#c2d5f5"></div>
<div class="abs" style="left:1502px;top:1464px;width:45px;height:35px;border-radius:10px;border:1px solid #c4c7c5;line-height:37px;text-align:center;font-size:19.6px;color:#1f1f1f;white-space:nowrap">All</div>
<div class="abs" style="left:1563px;top:1464px;width:119px;height:35px;border-radius:10px;background:#d3e3fd;line-height:37px;text-align:center;font-size:19.6px;color:#1f1f1f;white-space:nowrap">Fetch/XHR</div>
<div class="abs" style="left:1689px;top:1464px;width:56px;height:35px;border-radius:10px;border:1px solid #c4c7c5;line-height:37px;text-align:center;font-size:19.6px;color:#1f1f1f;white-space:nowrap">Doc</div>
<div class="abs" style="left:1753px;top:1464px;width:55px;height:35px;border-radius:10px;border:1px solid #c4c7c5;line-height:37px;text-align:center;font-size:19.6px;color:#1f1f1f;white-space:nowrap">CSS</div>
<div class="abs" style="left:1816px;top:1464px;width:40px;height:35px;border-radius:10px;border:1px solid #c4c7c5;line-height:37px;text-align:center;font-size:19.6px;color:#1f1f1f;white-space:nowrap">JS</div>
<div class="abs" style="left:1863px;top:1464px;width:61px;height:35px;border-radius:10px;border:1px solid #c4c7c5;line-height:37px;text-align:center;font-size:19.6px;color:#1f1f1f;white-space:nowrap">Font</div>
<div class="abs" style="left:1932px;top:1464px;width:56px;height:35px;border-radius:10px;border:1px solid #c4c7c5;line-height:37px;text-align:center;font-size:19.6px;color:#1f1f1f;white-space:nowrap">Img</div>
<div class="abs" style="left:1996px;top:1464px;width:79px;height:35px;border-radius:10px;border:1px solid #c4c7c5;line-height:37px;text-align:center;font-size:19.6px;color:#1f1f1f;white-space:nowrap">Media</div>
<div class="abs" style="left:2082px;top:1464px;width:100px;height:35px;border-radius:10px;border:1px solid #c4c7c5;line-height:37px;text-align:center;font-size:19.6px;color:#1f1f1f;white-space:nowrap">Manifest</div>
<div class="abs" style="left:2190px;top:1464px;width:83px;height:35px;border-radius:10px;border:1px solid #c4c7c5;line-height:37px;text-align:center;font-size:19.6px;color:#1f1f1f;white-space:nowrap">Socket</div>
<div class="abs" style="left:2280px;top:1464px;width:77px;height:35px;border-radius:10px;border:1px solid #c4c7c5;line-height:37px;text-align:center;font-size:19.6px;color:#1f1f1f;white-space:nowrap">Wasm</div>
<div class="abs" style="left:2364px;top:1464px;width:74px;height:35px;border-radius:10px;border:1px solid #c4c7c5;line-height:37px;text-align:center;font-size:19.6px;color:#1f1f1f;white-space:nowrap">Other</div>
<div class="abs" style="left:-188.8px;top:1506px;width:300px;height:34px;line-height:34px;text-align:right;font-size:17.3px;color:#1f1f1f;white-space:nowrap">100,000 ms</div>
<div class="abs" style="left:-73.1px;top:1506px;width:300px;height:34px;line-height:34px;text-align:right;font-size:17.3px;color:#1f1f1f;white-space:nowrap">200,000 ms</div>
<div class="abs" style="left:42.6px;top:1506px;width:300px;height:34px;line-height:34px;text-align:right;font-size:17.3px;color:#1f1f1f;white-space:nowrap">300,000 ms</div>
<div class="abs" style="left:158.3px;top:1506px;width:300px;height:34px;line-height:34px;text-align:right;font-size:17.3px;color:#1f1f1f;white-space:nowrap">400,000 ms</div>
<div class="abs" style="left:274.0px;top:1506px;width:300px;height:34px;line-height:34px;text-align:right;font-size:17.3px;color:#1f1f1f;white-space:nowrap">500,000 ms</div>
<div class="abs" style="left:389.7px;top:1506px;width:300px;height:34px;line-height:34px;text-align:right;font-size:17.3px;color:#1f1f1f;white-space:nowrap">600,000 ms</div>
<div class="abs" style="left:505.4px;top:1506px;width:300px;height:34px;line-height:34px;text-align:right;font-size:17.3px;color:#1f1f1f;white-space:nowrap">700,000 ms</div>
<div class="abs" style="left:621.1px;top:1506px;width:300px;height:34px;line-height:34px;text-align:right;font-size:17.3px;color:#1f1f1f;white-space:nowrap">800,000 ms</div>
<div class="abs" style="left:736.8px;top:1506px;width:300px;height:34px;line-height:34px;text-align:right;font-size:17.3px;color:#1f1f1f;white-space:nowrap">900,000 ms</div>
<div class="abs" style="left:852.5px;top:1506px;width:300px;height:34px;line-height:34px;text-align:right;font-size:17.3px;color:#1f1f1f;white-space:nowrap">1,000,000 ms</div>
<div class="abs" style="left:968.2px;top:1506px;width:300px;height:34px;line-height:34px;text-align:right;font-size:17.3px;color:#1f1f1f;white-space:nowrap">1,100,000 ms</div>
<div class="abs" style="left:1083.9px;top:1506px;width:300px;height:34px;line-height:34px;text-align:right;font-size:17.3px;color:#1f1f1f;white-space:nowrap">1,200,000 ms</div>
<div class="abs" style="left:1199.6px;top:1506px;width:300px;height:34px;line-height:34px;text-align:right;font-size:17.3px;color:#1f1f1f;white-space:nowrap">1,300,000 ms</div>
<div class="abs" style="left:1315.3px;top:1506px;width:300px;height:34px;line-height:34px;text-align:right;font-size:17.3px;color:#1f1f1f;white-space:nowrap">1,400,000 ms</div>
<div class="abs" style="left:1431.0px;top:1506px;width:300px;height:34px;line-height:34px;text-align:right;font-size:17.3px;color:#1f1f1f;white-space:nowrap">1,500,000 ms</div>
<div class="abs" style="left:1546.7px;top:1506px;width:300px;height:34px;line-height:34px;text-align:right;font-size:17.3px;color:#1f1f1f;white-space:nowrap">1,600,000 ms</div>
<div class="abs" style="left:1662.4px;top:1506px;width:300px;height:34px;line-height:34px;text-align:right;font-size:17.3px;color:#1f1f1f;white-space:nowrap">1,700,000 ms</div>
<div class="abs" style="left:1778.1px;top:1506px;width:300px;height:34px;line-height:34px;text-align:right;font-size:17.3px;color:#1f1f1f;white-space:nowrap">1,800,000 ms</div>
<div class="abs" style="left:1893.8px;top:1506px;width:300px;height:34px;line-height:34px;text-align:right;font-size:17.3px;color:#1f1f1f;white-space:nowrap">1,900,000 ms</div>
<div class="abs" style="left:2009.5px;top:1506px;width:300px;height:34px;line-height:34px;text-align:right;font-size:17.3px;color:#1f1f1f;white-space:nowrap">2,000,000 ms</div>
<div class="abs" style="left:2125.2px;top:1506px;width:300px;height:34px;line-height:34px;text-align:right;font-size:17.3px;color:#1f1f1f;white-space:nowrap">2,100,000 ms</div>
<div class="abs" style="left:2240.9px;top:1506px;width:300px;height:34px;line-height:34px;text-align:right;font-size:17.3px;color:#1f1f1f;white-space:nowrap">2,200,000 ms</div>
<div class="abs" style="left:2356.6px;top:1506px;width:300px;height:34px;line-height:34px;text-align:right;font-size:17.3px;color:#1f1f1f;white-space:nowrap">2,300,000 ms</div>
<div class="abs" style="left:2472.3px;top:1506px;width:300px;height:34px;line-height:34px;text-align:right;font-size:17.3px;color:#1f1f1f;white-space:nowrap">2,400,000 ms</div>
<div class="abs" style="left:2588.0px;top:1506px;width:300px;height:34px;line-height:34px;text-align:right;font-size:17.3px;color:#1f1f1f;white-space:nowrap">2,500,000 ms</div>
<div class="abs dtt" style="left:2644px;top:1370px;height:36px;line-height:36px;font-size:22px;color:#1f1f1f;">5</div>
<div class="abs dtt" style="left:2689px;top:1370px;height:36px;line-height:36px;font-size:22px;color:#1f1f1f;">2</div></div>
<svg class="abs" style="left:0;top:1294px;z-index:3" width="2879" height="271" viewBox="0 1294 2879 271" fill="none" stroke="#474747" stroke-width="2.2">
  <!-- info icon -->
  <circle cx="41.9" cy="1330" r="9.8" stroke="#0b57d0" stroke-width="2.1"/>
  <path d="M41.9 1328.6 V1335.8" stroke="#0b57d0" stroke-width="2"/>
  <circle cx="41.9" cy="1325.3" r="1.1" fill="#0b57d0" stroke="none"/>
  <!-- close info -->
  <path d="M2828.5 1323.5 L2841.5 1336.5 M2841.5 1323.5 L2828.5 1336.5" stroke-width="2"/>
  <!-- inspect -->
  <path d="M17.3 1377.8 H40 V1385 M17.3 1377.8 V1399.5 H24" stroke-dasharray="2.2 2.8" stroke-width="2.1"/>
  <path d="M27.3 1400.5 V1388 H40.5 M27.8 1388.5 L40.3 1400.5" stroke-width="2.2"/>
  <!-- device -->
  <path d="M91 1379 H68 V1396.8" stroke-width="2.3"/>
  <path d="M64 1397 H77" stroke-width="2.6"/>
  <rect x="82.5" y="1384.2" width="8" height="13.3" rx="1" stroke-width="2.2"/>
  <!-- record -->
  <circle cx="28.4" cy="1434.5" r="12" stroke="#d93025" stroke-width="2.3"/>
  <rect x="23.3" y="1429.2" width="10.6" height="10.6" fill="#d93025" stroke="none"/>
  <!-- clear -->
  <circle cx="77.3" cy="1434.5" r="12" stroke-width="2.3"/>
  <path d="M70.2 1442 L84.5 1427" stroke-width="2.3"/>
  <!-- funnel -->
  <path d="M131 1424 H152 L143.2 1434 V1444.8 H139.8 V1434 Z" fill="#1a73e8" stroke="none"/>
  <circle cx="152.5" cy="1443.4" r="3.6" fill="#1a73e8" stroke="none"/>
  <!-- search -->
  <circle cx="186.4" cy="1430.8" r="7.3" stroke-width="2.3"/>
  <path d="M191.8 1436.2 L201.6 1445.6" stroke-width="2.4"/>
  <!-- throttle triangle -->
  <path d="M792.6 1431.4 H806.1 L799.4 1437.9 Z" fill="#474747" stroke="none"/>
  <!-- wifi -->
  <path d="M830 1429 Q843 1417.5 856 1429" stroke-width="2.4"/>
  <path d="M834.8 1434.3 Q843 1427.5 849.8 1432.6" stroke-width="2.4"/>
  <path d="M839 1437.2 L842.6 1435.8 L842.6 1441.6 Z" fill="#474747" stroke="none"/>
  <circle cx="850.8" cy="1440" r="3.4" stroke-width="2.4"/>
  <path d="M850.8 1434.2 V1435.4 M850.8 1444.6 V1445.8 M845 1440 H846.2 M855.4 1440 H856.6 M846.7 1435.9 L847.5 1436.7 M854.1 1443.3 L854.9 1444.1 M854.9 1435.9 L854.1 1436.7 M847.5 1443.3 L846.7 1444.1" stroke-width="2"/>
  <!-- upload -->
  <path d="M907.4 1439.5 V1424.5 M901.2 1430.5 L907.4 1424.3 L913.6 1430.5" stroke-width="2.4"/>
  <path d="M898 1440 V1443.2 H917 V1440" stroke-width="2.4"/>
  <!-- download -->
  <path d="M956.6 1422.2 V1437 M950.2 1431.8 L956.6 1438 L963 1431.8" stroke-width="2.4"/>
  <path d="M947 1440 V1443.2 H966.2 V1440" stroke-width="2.4"/>
  <!-- filter funnel outline -->
  <path d="M29.5 1474.5 H44.5 L39 1481.5 V1489.5 H35 V1481.5 Z" stroke-width="2" stroke-linejoin="round"/>
  <!-- more filters triangle -->
  <path d="M1458 1477.5 H1473 L1465.5 1485.5 Z" fill="#474747" stroke="none"/>
  <!-- error icon -->
  <circle cx="2629.7" cy="1387" r="9.3" fill="#dc362e" stroke="none"/>
  <path d="M2626.2 1383.5 L2633.2 1390.5 M2633.2 1383.5 L2626.2 1390.5" stroke="#fff" stroke-width="1.8"/>
  <!-- issue icon -->
  <path d="M2667.2 1379.5 H2685.8 V1394.5 H2671 L2667.2 1398.5 Z" fill="#dc362e" stroke="none"/>
  <path d="M2674.3 1384.6 L2678.7 1389 M2678.7 1384.6 L2674.3 1389" stroke="#fff" stroke-width="1.5"/>
  <!-- gear tab bar -->
  <g transform="translate(2751.5 1387)"><path id="gear" d="M-2.2 -12 H2.2 L2.9 -8.6 L5.5 -7.3 L8.6 -8.5 L10.8 -4.7 L8.3 -2.4 V2.4 L10.8 4.7 L8.6 8.5 L5.5 7.3 L2.9 8.6 L2.2 12 H-2.2 L-2.9 8.6 L-5.5 7.3 L-8.6 8.5 L-10.8 4.7 L-8.3 2.4 V-2.4 L-10.8 -4.7 L-8.6 -8.5 L-5.5 -7.3 L-2.9 -8.6 Z" stroke-width="2.1" stroke-linejoin="round"/><circle r="3.6" fill="#474747" stroke="none"/></g>
  <!-- dots -->
  <circle cx="2800" cy="1378.5" r="2.2" fill="#474747" stroke="none"/>
  <circle cx="2800" cy="1387" r="2.2" fill="#474747" stroke="none"/>
  <circle cx="2800" cy="1395.5" r="2.2" fill="#474747" stroke="none"/>
  <!-- close devtools -->
  <path d="M2839 1379 L2855 1395 M2855 1379 L2839 1395" stroke-width="2.2"/>
  <!-- gear toolbar -->
  <g transform="translate(2847 1434.4)"><use href="#gear"/><circle r="3.6" fill="#474747" stroke="none"/></g>
  <!-- timeline handles -->
  <path d="M0 1505 H3 A5 5 0 0 1 8 1510 V1532 A5 5 0 0 1 3 1537 H0" fill="#e3ecfb" stroke="#a8c7fa" stroke-width="1"/>
  <path d="M3 1513 V1528" stroke="#0b57d0" stroke-width="1.5"/>
  <path d="M3 1551 H17" stroke="#ababab" stroke-width="3"/>
  <path d="M2879 1505 H2876 A5 5 0 0 0 2871 1510 V1532 A5 5 0 0 0 2876 1537 H2879" fill="#e3ecfb" stroke="#a8c7fa" stroke-width="1"/>
  <path d="M2875 1513 V1528" stroke="#0b57d0" stroke-width="1.5"/>
  <path d="M2481 1562 H2498 M2715.5 1562 H2732 M2771 1562 H2778 M2780 1562 H2796" stroke="#4c8df6" stroke-width="4"/>
</svg>

<div class="abs" style="left:0;top:1564px;width:2879px;height:1px;background:#b8bcc2;z-index:4"></div>
<div class="abs" style="left:0;top:1537px;width:2.5px;height:28px;background:#a8c7fa;z-index:4"></div>
<!--/DT-->

</body></html>
